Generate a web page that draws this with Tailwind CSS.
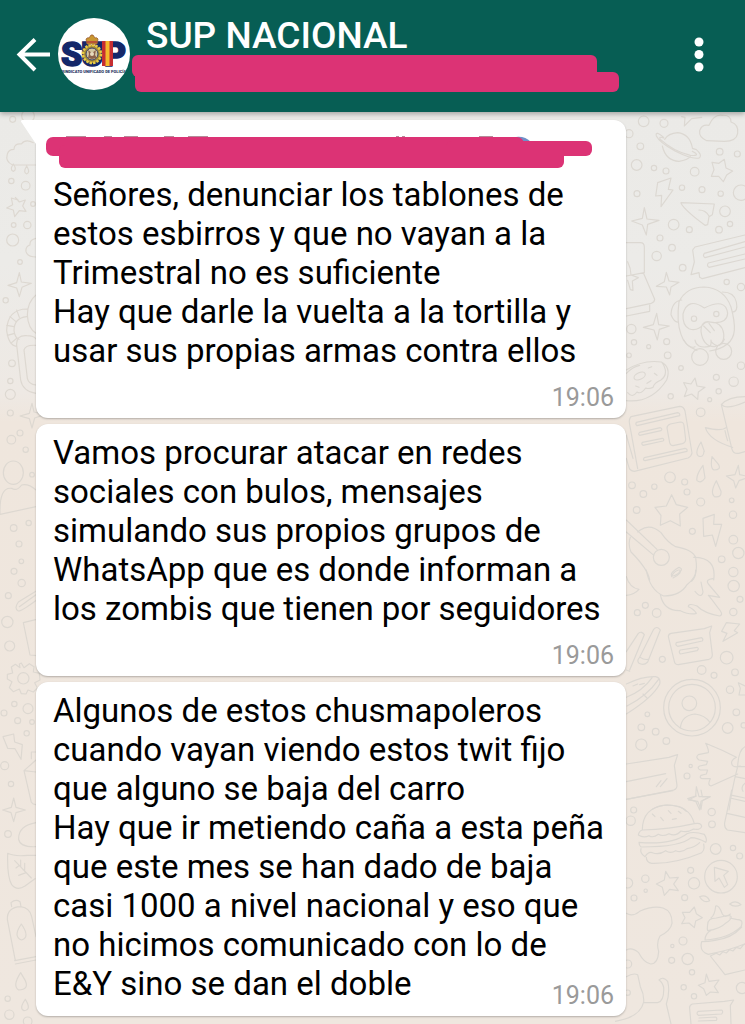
<!DOCTYPE html>
<html lang="es">
<head>
<meta charset="utf-8">
<meta name="viewport" content="width=device-width, initial-scale=1">
<title>SUP NACIONAL</title>
<script src="https://cdn.jsdelivr.net/npm/@tailwindcss/browser@4"></script>
</head>
<body class="flex min-h-screen flex-col bg-[#eee7df] font-['Roboto',sans-serif] text-black">
<header class="relative z-10 flex h-28 items-center bg-[#075e54] pl-4 pr-6 shadow-[0_2px_5px_rgba(0,0,0,0.3)]">
  <button type="button" aria-label="Atrás" class="shrink-0">
    <svg class="block h-9 w-9" viewBox="0 0 36 36" fill="none" stroke="#fff" stroke-width="4"><path d="M34 16.500H4M19 1.500L3.500 16.500L19 32"/></svg>
  </button>
  <a href="#grupo" aria-label="Foto del grupo" class="ml-1.5 block shrink-0 self-start pt-[18px]">
    <svg class="block h-[72px] w-[72px]" viewBox="0 0 72 72">
      <defs><clipPath id="disc"><circle cx="36" cy="36" r="36"/></clipPath></defs>
      <circle cx="36" cy="36" r="36" fill="#fff"/>
      <g clip-path="url(#disc)">
        <text x="3 23 46" y="48" font-family="Roboto" font-weight="900" font-size="34" fill="#14286a" stroke="#14286a" stroke-width="1.500">SUP</text>
        <path d="M44 23h11v25H44z" fill="#c62d32"/><path d="M47.500 23h4v25h-4z" fill="#f4b92c"/>
        <circle cx="34" cy="36" r="9" fill="#a88c35" stroke="#e7cb45" stroke-width="2.500" stroke-dasharray="2.500 1"/>
        <circle cx="34" cy="36" r="6" fill="#d3c6a0" stroke="#34406a" stroke-width="1"/>
        <path d="M30 32l4 3 4-3-1 5 2 3-5 1-4-1 1-4z" fill="#8b624b"/><circle cx="34" cy="36" r="2" fill="#e8dcc0"/>
        <path d="M29 26l-1-5q2-2 3-1l2-3h2l2 3q2-1 3 1l-1 5z" fill="#c99730" stroke="#9c5c32" stroke-width=".8"/><path d="M29 24h10" stroke="#b33b38" stroke-width="1.500"/>
        <text x="36" y="55" text-anchor="middle" font-family="Roboto" font-weight="900" font-size="4" fill="#26345f">SINDICATO UNIFICADO DE POLICÍA</text>
      </g>
    </svg>
  </a>
  <div class="relative ml-4 min-w-0 flex-1 self-start pt-4">
    <h1 class="text-[37px] leading-10 font-medium text-white">SUP NACIONAL</h1>
    <svg class="absolute top-[55px] -left-[14px] h-10 w-[490px]" viewBox="0 0 490 40" fill="#dc3375"><rect x="0" y="0" width="465" height="22" rx="6"/><rect x="3" y="17" width="484" height="20" rx="6"/><path d="M459 8h6v12h-6zM3 12h10v16H3z"/></svg>
  </div>
  <button type="button" aria-label="Más opciones" class="shrink-0">
    <svg class="block h-10 w-11" viewBox="0 0 44 40" fill="#fff"><circle cx="22" cy="6" r="4.500"/><circle cx="22" cy="18.500" r="4.500"/><circle cx="22" cy="31" r="4.500"/></svg>
  </button>
</header>

<main class="relative flex-1 overflow-hidden bg-[linear-gradient(#ebeae7_0px,#ecebe8_150px,#eee9e4_280px,#efe6dd_310px,#efe7df_912px)] pt-2 pr-[119px] pb-2 pl-9">
  <!-- Wallpaper, left edge -->
  <svg aria-hidden="true" class="absolute top-0 left-0 h-[912px] w-[60px]" viewBox="0 6 180 2736" fill="none" stroke="#ddd8d1" stroke-width="3.500" stroke-linejoin="round" stroke-linecap="round">
    <path d="M110 165H38Q15 155 22 132Q26 118 42 118Q42 100 64 102Q76 86 100 98M40 162q-12 18 0 22q12-4 0-22M80 168q-12 20 0 24q12-4 0-24"/>
    <path d="M46 262l12 14 18-6-8 18 10 16-20-2-14 18-4-20-20-6 18-10-4-20 20 6zM58 488l6 28 30 4-28 12-8 28-8-26-26-8 26-8z"/>
    <path d="M108 385q-20 4-18 20q-14 4-12 20q4 16 30 16M108 555q-25 20-26 60q2 40 26 55M82 597q-60 0-62 65q6 45 30 47M80 620q-38 4-38 42q2 20 15 26M50 600l8 22M30 620l17 14M20 646l22 4M22 676l22-6M35 698l16-14M50 705q-2-30 30-28q22 0 28 10M50 705l12 105q6 34 46 40M72 720l10 85q4 18 26 20M72 720q4-16 36-14"/>
    <path d="M96 880l6 26 32 8-30 10-8 30-8-28-28-8 28-8zM0 1210Q-2 1130 35 1135Q50 1145 65 1125Q85 1120 108 1140M0 1213L108 1190"/>
    <ellipse cx="40" cy="1088" rx="30" ry="35"/>
    <g><circle cx="38" cy="28" r="9"/><circle cx="84" cy="18" r="19"/><circle cx="34" cy="213" r="8"/><circle cx="77" cy="227" r="13"/><circle cx="99" cy="282" r="7"/><circle cx="41" cy="345" r="7"/><circle cx="82" cy="345" r="11"/><circle cx="38" cy="390" r="18"/><circle cx="60" cy="456" r="7"/><circle cx="17" cy="571" r="8"/><circle cx="36" cy="760" r="10"/><circle cx="31" cy="813" r="8"/><circle cx="31" cy="853" r="15"/><circle cx="31" cy="909" r="9"/><circle cx="60" cy="969" r="9"/><circle cx="34" cy="989" r="13"/><circle cx="77" cy="1019" r="8"/><circle cx="96" cy="1094" r="7"/><circle cx="41" cy="1254" r="10"/><circle cx="86" cy="1239" r="8"/><circle cx="57" cy="1302" r="9"/><circle cx="64" cy="1354" r="7"/></g>
    <g transform="translate(0 1350)">
      <circle cx="42" cy="34" r="9"/><circle cx="65" cy="69" r="11"/><circle cx="25" cy="107" r="9"/><circle cx="22" cy="186" r="17"/><circle cx="29" cy="258" r="15"/>
      <path d="M110 92L55 126q-14 20 0 27q8 2 55-33M58 140l50-36M110 178l-40 10 20 97 20 2"/>
      <circle cx="70" cy="355" r="17"/><path d="M58 312l6-3 8 14 16-12 14 9-2 16 18 4 2 20-16 8 8 16-12 12-16-6-6 12-14-1-6-14-18 8-12-12 8-18-14-8 0-14 16-4-4-18 12-8 14 10z"/>
      <circle cx="43" cy="432" r="8"/><circle cx="12" cy="459" r="9"/><circle cx="84" cy="446" r="15"/><circle cx="53" cy="482" r="9"/><circle cx="80" cy="520" r="8"/><circle cx="96" cy="486" r="7"/><circle cx="33" cy="672" r="8"/><circle cx="24" cy="822" r="10"/><circle cx="14" cy="617" r="12"/>
      <path d="M9 530l32-8 3 24 23 8-4 44-18-32-22-1zM94 596v-20h14M108 600l-36 32 22 95q4 7 14 7M72 632l36 4M41 714l7 28 28 8-28 8-7 27-8-27-25-8 26-8zM108 788q-54 10-52 50q4 24 52 22M23 880q20 10 60 6l25 0M23 880q-2 70 12 94 16 20 40 4l30-22M44 902l50 52M62 920v-20M74 934v-24M58 916l-10 8M78 938l-22 8"/>
      <path d="M35 1040l-2-12q14-12 27-3l3 15M22 1078q-1-36 40-38q28 4 33 30l13 60M22 1078l24 124M44 1202l64-12M46 1212l62-12M64 1092q-26 38 0 48q28-8 0-48M62 1238q-26 40-6 52q32-2 20-28zM76 1318q-20 28-4 34q24-2 4-34"/>
      <circle cx="23" cy="1316" r="8"/><circle cx="28" cy="1364" r="14"/><circle cx="83" cy="1384" r="13"/>
    </g>
  </svg>
  <!-- Wallpaper, right edge -->
  <svg aria-hidden="true" class="absolute top-0 right-0 h-[912px] w-[130px]" viewBox="0 6 390 2736" fill="none" stroke="#dcd8d2" stroke-width="3.500" stroke-linejoin="round" stroke-linecap="round">
    <g>
      <circle cx="86" cy="34" r="16"/><circle cx="147" cy="40" r="12"/><circle cx="42" cy="71" r="12"/><circle cx="76" cy="109" r="10"/><circle cx="65" cy="165" r="16"/><circle cx="117" cy="174" r="8"/><circle cx="153" cy="183" r="9"/><circle cx="239" cy="185" r="13"/><circle cx="314" cy="125" r="10"/><circle cx="367" cy="132" r="9"/><circle cx="201" cy="233" r="8"/><circle cx="261" cy="239" r="9"/><circle cx="317" cy="251" r="8"/><circle cx="378" cy="248" r="23"/><circle cx="66" cy="251" r="9"/><circle cx="330" cy="304" r="16"/><circle cx="176" cy="344" r="16"/><circle cx="223" cy="359" r="9"/><circle cx="312" cy="359" r="10"/><circle cx="345" cy="342" r="8"/><circle cx="135" cy="384" r="9"/><circle cx="171" cy="413" r="10"/><circle cx="125" cy="438" r="14"/><circle cx="203" cy="473" r="10"/><circle cx="335" cy="516" r="8"/><circle cx="378" cy="531" r="11"/><circle cx="49" cy="657" r="14"/><circle cx="57" cy="697" r="8"/><circle cx="101" cy="710" r="6"/><circle cx="155" cy="695" r="9"/>
      <path d="M200 20l10 2-2 26 22-22 30-4M275 92q-24-10-21-30 6-20 28-16 14-34 40-30 26-2 26 20 24 8 20 34-4 24-40 24zM149 88Q160 70 188 68q36 4 44 45M142 108q10 44 50 46 26-4 34-14M146 82Q120 60 124 78q10 20 56 45 56 28 74 20 8-8-10-24l-12-4M146 84q-16-6-10 4 40 36 90 48 26 2 16-6l-10-6"/>
      <path d="M328 148l5 26 20 9-18 12-10 20-14-16-22 0 8-20-6-22 21 3zM128 218l40-14-8 34 14 2-36 50 2-34-18 2zM88 293l8 34 36 4-34 12-4 32-12-30-32-12 32-8zM198 278l100 4-6 32-10 6-4 24-8 2q-60-44-72-66M252 300q20 0 30 18M154 487l8 26 30 4-24 14-4 24-10-24-30-2 24-14zM125 610l6 34 32 4-30 10-6 32-10-30-32-8 30-8z"/>
      <path d="M390 375L240 411 233 420 238 456 228 494 252 488 254 502 262 506 390 473M390 395L268 430q-6 8 2 13L390 411M390 432L280 459q-6 8 2 13L390 447M34 398H76q12 0 12 14v76L34 498M85 488l34 80q0 8-10 12L34 596M34 618l70-14v-20M38 455q10 20 10 40l22 8-18 10 2 28-8-2-8-28"/>
      <path d="M192 575q22-44 76-44 60 4 80 60 12 44 10 70-4 50-74 62M192 575q-8 60 6 98 10 34 48 48M200 570q-30 4-32 44 10 24 22 22M322 546q36 0 42 30 6 30-12 30M268 594q-50-34-64 18-2 34 18 44 24 10 44-14 6-10 30-4 40 2 42-28-6-48-70-16M258 664q0-34 28-28 34 0 40 34 4 34-28 40-34 0-40-46M266 648l20 20M282 640l16 22"/>
      <circle cx="237" cy="626" r="8"/><circle cx="304" cy="612" r="8"/>
    </g>
    <g transform="translate(0 690)">
      <path d="M206 0q16 28 34 20M240 0q4 26 40 20 10 0 8-20M288 4q24 28 40-6"/><circle cx="255" cy="51" r="25"/><circle cx="326" cy="34" r="24"/>
      <circle cx="158" cy="46" r="10"/><circle cx="198" cy="84" r="7"/><circle cx="42" cy="46" r="7"/><circle cx="304" cy="112" r="9"/><circle cx="356" cy="125" r="14"/><circle cx="378" cy="77" r="11"/><circle cx="311" cy="154" r="8"/><circle cx="284" cy="179" r="6"/><circle cx="167" cy="169" r="8"/><circle cx="257" cy="217" r="13"/>
      <path d="M34 90q50-32 105-24 30 16 16 54Q110 190 34 182M140 66q24 34-2 54-20 8-24 22-16 6-22 2-14 20-26 12-14 20-28 2M34 100q20-20 40-24M100 84l10-4M118 100l8 6M96 130l12-8M62 138l10 4M240 114l6 24 24 4-20 14-2 22-18-16-22 8 8-22-10-20 22 4z"/><ellipse cx="74" cy="108" rx="18" ry="10" transform="rotate(-25 74 108)"/>
      <path d="M48 230L194 199q12 0 16 14l21 126q-2 10-12 15L58 394q-14-2-16-12L34 355M48 230q-8 10-4 24l24 132M34 285l20 70M64 247L188 218q8 2 6 9L66 257q-6-4-2-10M74 277l62-14q8 4 2 9L74 286q-6-4 0-9M82 307l60-12q8 4 2 8L84 316q-6-4-2-9M88 353l122-28q8 2 6 9L90 362q-8-2-2-9M166 252l30-6q10 0 11 10l5 42q0 10-10 13l-28 6q-8 0-10-9l-8-44q0-8 10-12"/>
      <path d="M390 170q-50 0-71 24l32 134q4 14 20 12l19-5M320 192q10 20 70-6M333 263q-14 12-62 0 12 38 82 59M330 272q4 20 8 30M258 306q-20 32-8 42 16 6 17-14M258 306l10 28M291 350q-6 36 6 40 22 0 14-16zM264 376q-22 30-18 46 12 10 24-8zM304 422q-20 36-6 48 22 4 20-16zM370 376l4 28 20 4M370 376l-10 28-26 4 22 14 6 22 10-22 18-6"/>
      <circle cx="165" cy="412" r="16"/><circle cx="209" cy="426" r="9"/><circle cx="216" cy="456" r="9"/><circle cx="118" cy="440" r="8"/><circle cx="85" cy="462" r="10"/><circle cx="51" cy="436" r="10"/><circle cx="65" cy="510" r="10"/><circle cx="257" cy="486" r="12"/><circle cx="350" cy="481" r="7"/><circle cx="354" cy="524" r="11"/><circle cx="232" cy="574" r="9"/><circle cx="355" cy="599" r="13"/><circle cx="370" cy="639" r="17"/><circle cx="320" cy="658" r="10"/><circle cx="355" cy="696" r="14"/>
      <path d="M170 464l14 30 34 8-24 20 2 36-30-16-30 14 2-30-18-24 34-4zM264 535l34-12-2 30 24 0-18 66-10-34-26 4zM34 540L126 628M34 576L114 644M76 570q30-20 62 8 20 30 44 42 54 10 60 34 8 50-12 70M76 570l-8 6M46 592q-8 20 2 44 50 50 56 84M236 652q70 0 60 68M170 708q-6-10 22-26 12 4 4 12-12 14-26 14"/><circle cx="139" cy="652" r="24"/>
    </g>
    <g transform="translate(0 1380)">
      <path d="M94 0q10 60 52 78 50 0 70-34 28-22 26-44M136 74q10 50 60 48 30 14 48 8-6-12-24-20 0-12 26-2 22 22 68 30 14-4-6-26-22-30-28-36l34 6-34-40q-10-14 14-16M240 64q20 24 24 2l-6-30M170 20q4-14 20-20M194 0q8 10-20 24M34 20q10 34 38 38-14 16-38 18"/>
      <circle cx="91" cy="106" r="9"/><circle cx="67" cy="128" r="9"/><circle cx="125" cy="129" r="13"/><circle cx="142" cy="268" r="9"/><circle cx="356" cy="48" r="17"/><circle cx="375" cy="88" r="9"/><circle cx="355" cy="126" r="11"/><circle cx="335" cy="263" r="19"/><circle cx="260" cy="300" r="13"/><circle cx="297" cy="316" r="9"/><circle cx="360" cy="307" r="10"/><circle cx="345" cy="359" r="11"/><circle cx="364" cy="427" r="10"/><circle cx="338" cy="474" r="16"/><circle cx="386" cy="466" r="8"/><circle cx="97" cy="433" r="7"/><circle cx="79" cy="472" r="10"/><circle cx="122" cy="485" r="10"/><circle cx="79" cy="524" r="17"/><circle cx="154" cy="513" r="10"/><circle cx="227" cy="588" r="5"/><circle cx="216" cy="618" r="9"/>
      <path d="M34 245L70 190q10-8 18 4L44 300M34 300l10 4M74 262L116 178q10-12 20 2L98 276q-12 12-26 4-8-8 2-18M76 262q10 8 24 6M160 200q0-8 8-10L268 176l22-8-6 20 8 66q0 10-10 14L190 284q-10 0-12-10zM184 218l76-15q6 4 2 10l-74 16q-8-4-4-11M196 240l50-8q8 4 0 10l-50 10q-6-6 0-12M334 158l40 4-16 20 10 6-44 26 12-24-16-6zM34 342q50-24 88-22 16 4 12 22-20 40-100 90M34 382q50-20 78-60M36 408q60-30 95-80M84 372l12 12M370 338l20 10M390 375l-18 0 4-20-6-16"/>
      <circle cx="231" cy="413" r="85"/><circle cx="231" cy="413" r="70"/><circle cx="223" cy="400" r="22"/><path d="M196 474q4-38 44-42 30 4 44 24M54 348l14-6M74 344l14-4"/>
      <path d="M34 582L162 562q14-4 26-8l-10 32 8 60q0 12-10 14L34 688M34 635l118-24M124 650l14-18M136 650l20-24M272 520q50 20 92 42M272 520q10 20 8 28l-30 6q-10 8 2 16l26 4-4 10-20 4q-10 6 2 12l22 0-4 12-16 4q-6 8 4 10l24 0q-10 20 2 22l80-36M364 562q-20 10-12 24 8 8 24 2M390 530q-20 10-22 60-16 60-26 130M366 590h24M360 620l30 6M390 640q-14 10-6 24M352 676l38 8M244 650l8 30 32 0-26 14-4 26-12-26-24-8 24-8zM112 718q30-20 80-8 16 6 22 14"/>
    </g>
    <g transform="translate(0 2040)">
      <path d="M34 28l140-26M258 0l4 20 24 0-24 12-4 26-10-24-28-4 24-12M350 0l-21 98q-2 16 8 22l53 8M345 24l45 10M336 70l54 12"/>
      <circle cx="56" cy="60" r="9"/><circle cx="47" cy="92" r="14"/><circle cx="290" cy="66" r="11"/><circle cx="291" cy="103" r="10"/><circle cx="302" cy="177" r="16"/><circle cx="354" cy="174" r="8"/><circle cx="374" cy="198" r="9"/><circle cx="227" cy="241" r="9"/><circle cx="237" cy="280" r="17"/><circle cx="91" cy="266" r="11"/><circle cx="38" cy="279" r="15"/><circle cx="57" cy="324" r="9"/><circle cx="92" cy="302" r="5"/><circle cx="209" cy="323" r="9"/><circle cx="204" cy="453" r="12"/><circle cx="172" cy="468" r="5"/><circle cx="170" cy="511" r="9"/><circle cx="218" cy="507" r="17"/><circle cx="231" cy="547" r="8"/><circle cx="206" cy="592" r="8"/><circle cx="237" cy="619" r="8"/><circle cx="381" cy="594" r="17"/><circle cx="38" cy="522" r="12"/><circle cx="38" cy="608" r="8"/>
      <path d="M82 120q0-68 72-75 70 0 84 56M82 120q80-2 156-19 20-4 22 8-4 12-24 8-20 12-38 6-16 18-36 8-18 10-32 2-16 12-28 4-16 8-32-2 2-12 12-15M72 157q100 8 144-26 20-8 52 2M72 157q0 10 6 14 120 0 150-28 20 0 44 14 6-8-4-24M78 176q-4 14 12 24 10-16 22-12 20 8 40-6 14 10 30 0 18 8 34-6 24-4 38-18M94 202q0 16 16 18 70 2 150-32 10-8 6-26M112 72l8 8M137 82l8 10M160 62l8 8M172 88l12-2M190 64l8 6"/>
      <circle cx="318" cy="260" r="49"/><path d="M298 232l42 12-14 12 12 28-10 8-16-28-12 10zM152 244l12 20 26-2-14 20 14 20-26-4-16 18-6-24-18-10 24-12zM238 351l6 20 18 12-20 10-4 20-16-14-22 2 10-18-8-16 22 0zM254 320q20-8 30 12-18 10-30-12M344 342q18-14 34 2-20 10-34-2"/>
      <path d="M34 370q18 12 40-6 40-18 70-10 28 10 27 46-4 22-36 38-12 20-4 46-2 38-24 38-20-4-36-34-20-18-37-8M288 384q12-10 14-36 10-4 20 24 8 14 24 0M278 404q0-20 26-20 18-4 36-8 20 4-6 22-20 20-56 24-2-6 0-18M270 450q0-20 20-30M270 450q70-4 108-40 10-22-14-22l-20-4M260 455q-8 30 20 38 70-14 110-32M260 455q20 0 40-4 50-6 80-40M286 498l44 56 60-14M286 498l18-8 10 5 10-10 10 4 10-10 10 4 10-11 12 4 10-12 14-3"/>
      <path d="M274 552l8 22 30-4-14 20 12 18-24-2-12 10-8-20-16-10 20-8zM232 642l96-8 28-4-10 16 2 56M232 642q-10 4-8 14l4 46M250 664l70-4q6 4 0 12l-70 4q-8-6 0-12M252 684l50-3q6 4 2 10l-54 2M34 560q20-12 34-6l8 36q12 24 10 46-10 46-86 58M86 638h42q20-4 18-46-4-16-14-22 12-12 26 4 8 30-4 68l14 60"/>
    </g>
  </svg>

  <div class="relative flex flex-col gap-1.5">
    <article class="relative grid rounded-xl rounded-tl-none bg-white pt-[55px] pr-3 pb-1.5 pl-[17px] shadow-[0_1px_2px_rgba(0,0,0,0.25)]">
      <svg aria-hidden="true" class="absolute top-0 -left-4 h-6 w-5" viewBox="0 0 20 24"><path d="M20 0H2Q0 1 2 3L16 24H20Z" fill="#fff"/></svg>
      <svg aria-hidden="true" class="absolute top-[15px] left-[10px] h-9 w-[550px]" viewBox="0 0 550 36">
        <path d="M20 1.500h20M58 1.500h8M78 1.500h14M118 1.500h10M142 1.500h20M350 1.500h3M356 1.500h3M433 1.500h14" stroke="#b58a98"/>
        <path d="M470 2q9-1 15 5h-10z" fill="#6f8fc8"/>
        <g fill="#dc3375"><rect y="2" width="478" height="19" rx="7"/><rect x="400" y="6" width="146" height="15" rx="6"/><rect x="13" y="10" width="505" height="23" rx="6"/></g>
      </svg>
      <p class="text-[33px] leading-[39px] whitespace-nowrap">Señores, denunciar los tablones de<br>estos esbirros y que no vayan a la<br>Trimestral no es suficiente<br>Hay que darle la vuelta a la tortilla y<br>usar sus propias armas contra ellos</p>
      <time class="mt-3.5 justify-self-end text-[25px] leading-7 text-[#9a9a9a]">19:06</time>
    </article>
    <article class="grid rounded-xl bg-white pt-[9px] pr-3 pb-1.5 pl-[17px] shadow-[0_1px_2px_rgba(0,0,0,0.25)]">
      <p class="text-[33px] leading-[39px] whitespace-nowrap">Vamos procurar atacar en redes<br>sociales con bulos, mensajes<br>simulando sus propios grupos de<br>WhatsApp que es donde informan a<br>los zombis que tienen por seguidores</p>
      <time class="mt-3.5 justify-self-end text-[25px] leading-7 text-[#9a9a9a]">19:06</time>
    </article>
    <article class="grid rounded-xl bg-white pt-[9px] pr-3 pb-1.5 pl-[17px] shadow-[0_1px_2px_rgba(0,0,0,0.25)]">
      <p class="col-start-1 row-start-1 pb-[7px] text-[33px] leading-[39px] whitespace-nowrap">Algunos de estos chusmapoleros<br>cuando vayan viendo estos twit fijo<br>que alguno se baja del carro<br>Hay que ir metiendo caña a esta peña<br>que este mes se han dado de baja<br>casi 1000 a nivel nacional y eso que<br>no hicimos comunicado con lo de<br>E&amp;Y sino se dan el doble</p>
      <time class="col-start-1 row-start-1 self-end justify-self-end text-[25px] leading-7 text-[#9a9a9a]">19:06</time>
    </article>
  </div>
</main>
</body>
</html>
